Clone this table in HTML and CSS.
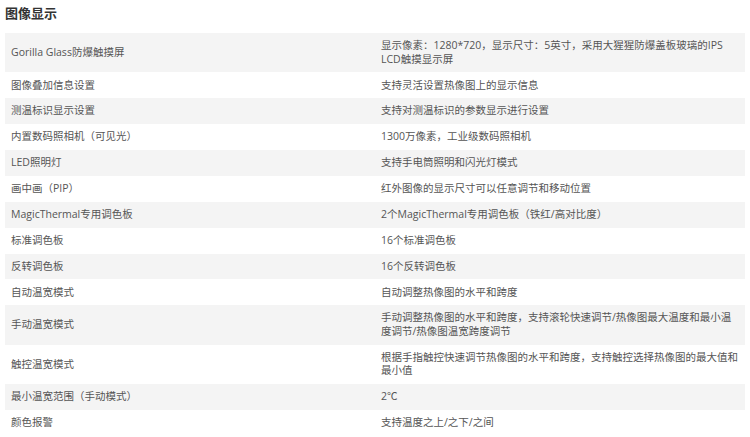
FILE: index.html
```html
<!DOCTYPE html>
<html lang="zh-CN">
<head>
<meta charset="utf-8">
<title>图像显示</title>
<link rel="stylesheet" href="styles.css">
</head>
<body>
<div class="page">
  <h2 class="title">图像显示</h2>
  <table class="spec">
    <tbody>
      <tr><td>Gorilla Glass防爆触摸屏</td><td>显示像素：1280*720，显示尺寸：5英寸，采用大猩猩防爆盖板玻璃的IPS LCD触摸显示屏</td></tr>
      <tr><td>图像叠加信息设置</td><td>支持灵活设置热像图上的显示信息</td></tr>
      <tr><td>测温标识显示设置</td><td>支持对测温标识的参数显示进行设置</td></tr>
      <tr><td>内置数码照相机（可见光）</td><td>1300万像素，工业级数码照相机</td></tr>
      <tr><td>LED照明灯</td><td>支持手电筒照明和闪光灯模式</td></tr>
      <tr><td>画中画（PIP）</td><td>红外图像的显示尺寸可以任意调节和移动位置</td></tr>
      <tr><td>MagicThermal专用调色板</td><td>2个MagicThermal专用调色板（铁红/高对比度）</td></tr>
      <tr><td>标准调色板</td><td>16个标准调色板</td></tr>
      <tr><td>反转调色板</td><td>16个反转调色板</td></tr>
      <tr><td>自动温宽模式</td><td>自动调整热像图的水平和跨度</td></tr>
      <tr><td>手动温宽模式</td><td>手动调整热像图的水平和跨度，支持滚轮快速调节/热像图最大温度和最小温度调节/热像图温宽跨度调节</td></tr>
      <tr><td>触控温宽模式</td><td>根据手指触控快速调节热像图的水平和跨度，支持触控选择热像图的最大值和最小值</td></tr>
      <tr><td>最小温宽范围（手动模式）</td><td>2℃</td></tr>
      <tr><td>颜色报警</td><td>支持温度之上/之下/之间</td></tr>
    </tbody>
  </table>
</div>
</body>
</html>
```
FILE: styles.css
```css
html, body {
  margin: 0;
  padding: 0;
  background: #ffffff;
}
.page {
  padding: 0 5px;
  font-family: "Open Sans", "Noto Sans CJK SC", sans-serif;
  color: #555555;
}
.title {
  margin: 0;
  height: 33px;
  padding-top: 4px;
  box-sizing: border-box;
  font-size: 13px;
  line-height: 18px;
  font-weight: bold;
  color: #333333;
}
.spec {
  width: 100%;
  border-collapse: collapse;
  table-layout: fixed;
}
.spec td {
  width: 50%;
  padding: 6.2px 6px 6.2px 6px;
  font-size: 10.5px;
  line-height: 13.5px;
  vertical-align: middle;
  text-align: left;
}
.spec tr:nth-child(odd) td {
  background: #f4f4f4;
}
```
